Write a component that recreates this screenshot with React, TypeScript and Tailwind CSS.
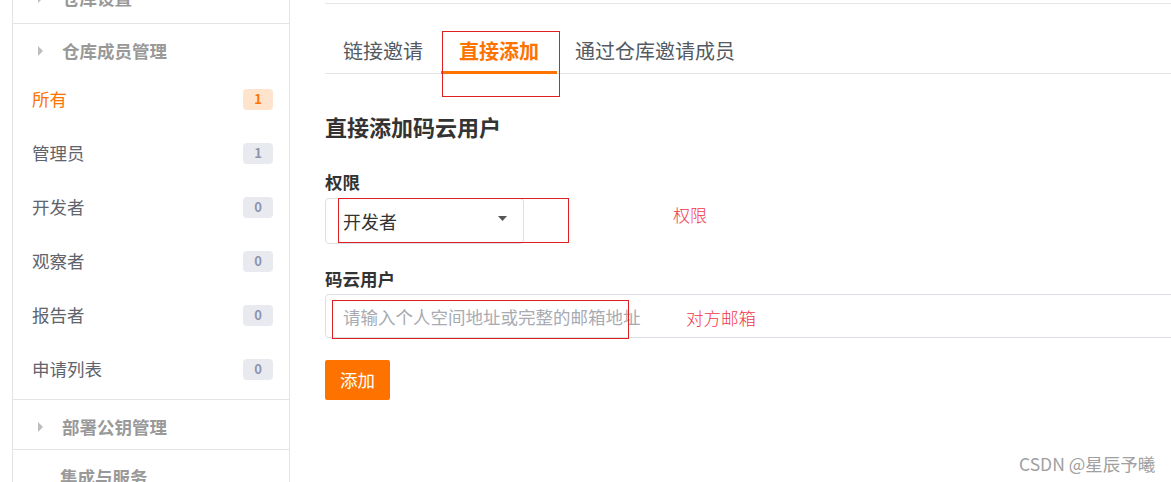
import { useState } from 'react';

const font = { fontFamily: '"Noto Sans CJK SC", "Noto Sans", sans-serif' };

const roles = [
  { label: '所有', count: 1, active: true },
  { label: '管理员', count: 1 },
  { label: '开发者', count: 0 },
  { label: '观察者', count: 0 },
  { label: '报告者', count: 0 },
  { label: '申请列表', count: 0 },
];

function GroupHeader({ label, className = '', arrow = true }: { label: string; className?: string; arrow?: boolean }) {
  return (
    <div className={`flex items-center pl-[25px] ${className}`}>
      {arrow ? (
        <span className="h-0 w-0 border-y-[5px] border-l-[5px] border-y-transparent border-l-[#bdbdbd]" />
      ) : (
        <span className="w-[3px]" />
      )}
      <span className="ml-[19px] text-[17.5px] font-bold leading-[24px] text-[#999]">{label}</span>
    </div>
  );
}

function Sidebar() {
  return (
    <aside className="ml-[12px] h-full w-[278px] shrink-0 border-x border-[#e4e4e4] bg-white">
      <div className="-mt-[27px]">
        <GroupHeader label="仓库设置" className="h-[50px]" />
        <div className="border-t border-[#e4e4e4]" />
        <GroupHeader label="仓库成员管理" className="h-[48px] pt-[6px]" />
        <ul className="pb-[3px]">
          {roles.map(role => (
            <li key={role.label} className="flex h-[54px] items-center justify-between pl-[19px] pr-[16px]">
              <span className={`text-[17.5px] leading-[24px] ${role.active ? 'text-[#fe7300]' : 'text-[#60646c]'}`}>{role.label}</span>
              <span
                className={`flex h-[21px] w-[30px] items-center justify-center rounded-[4px] text-[13px] font-bold ${
                  role.active ? 'bg-[#fee3cd] text-[#fe7300]' : 'bg-[#e9eaef] text-[#8c96b0]'
                }`}
              >
                {role.count}
              </span>
            </li>
          ))}
        </ul>
        <div className="border-t border-[#e4e4e4]" />
        <GroupHeader label="部署公钥管理" className="h-[49px] pt-[5px]" />
        <div className="border-t border-[#e4e4e4]" />
        <GroupHeader label="集成与服务" arrow={false} className="h-[49px] pt-[5px]" />
      </div>
    </aside>
  );
}

const tabs = ['链接邀请', '直接添加', '通过仓库邀请成员'];

export default function App() {
  const [tab, setTab] = useState(1);
  const [user, setUser] = useState('');

  return (
    <div style={font} className="relative flex h-[482px] w-[1171px] overflow-hidden bg-white">
      <Sidebar />

      <main className="relative ml-[35px] flex-1">
        <div className="mt-[3px] border-t border-[#e6e6e6]" />

        <div className="flex border-b border-[#e4e4e4]">
          {tabs.map((t, i) => (
            <button
              key={t}
              onClick={() => setTab(i)}
              className={`px-[18px] pb-[6px] pt-[33px] text-[20px] leading-[28px] border-b-[3px] -mb-px ${
                tab === i ? 'border-[#fe7300] font-bold text-[#fe7300]' : 'border-transparent text-[#555a62]'
              }`}
            >
              {t}
            </button>
          ))}
        </div>

        <h2 className="mt-[37px] text-[22px] font-bold leading-[30px] text-[#333]">直接添加码云用户</h2>

        <label className="mt-[29px] block text-[17.5px] font-bold leading-[24px] text-[#333]">权限</label>
        <div className="mt-[4px] flex h-[46px] w-[199px] items-center justify-between rounded-[4px] border border-[#dcdfe6] pl-[17px] pr-[16px]">
          <span className="text-[18px] leading-[24px] text-[#333]">开发者</span>
          <svg width="9" height="5" viewBox="0 0 9 5" className="mb-[5px]">
            <path d="M0 0h9L4.5 5z" fill="#555" />
          </svg>
        </div>

        <label className="mt-[23px] block text-[17.5px] font-bold leading-[24px] text-[#333]">码云用户</label>
        <input
          value={user}
          onChange={e => setUser(e.target.value)}
          placeholder="请输入个人空间地址或完整的邮箱地址"
          className="mt-[3px] h-[44px] w-[900px] rounded-[4px] border border-[#dcdfe6] pl-[17px] text-[17.5px] text-[#333] placeholder-[#a8abb2] outline-none"
        />

        <button className="mt-[22px] flex h-[40px] w-[65px] items-center justify-center rounded-[2px] bg-[#fe7300] text-[17.5px] leading-[24px] text-white">
          添加
        </button>

        {/* annotations */}
        <div className="absolute left-[117px] top-[31px] h-[66px] w-[118px] border border-[#e02020]" />
        <div className="absolute left-[13px] top-[198px] h-[45px] w-[231px] border border-[#e02020]" />
        <span className="absolute left-[348px] top-[203px] text-[17px] font-light leading-[24px] text-[#f0374a]">权限</span>
        <div className="absolute left-[7px] top-[300px] h-[39px] w-[297px] border border-[#e02020]" />
        <span className="absolute left-[361px] top-[306px] text-[17.5px] font-light leading-[24px] text-[#f0374a]">对方邮箱</span>
      </main>

      <span className="absolute left-[1019px] top-[452px] text-[17.5px] leading-[24px] text-[#a0a0a0]">CSDN @星辰予曦</span>
    </div>
  );
}
